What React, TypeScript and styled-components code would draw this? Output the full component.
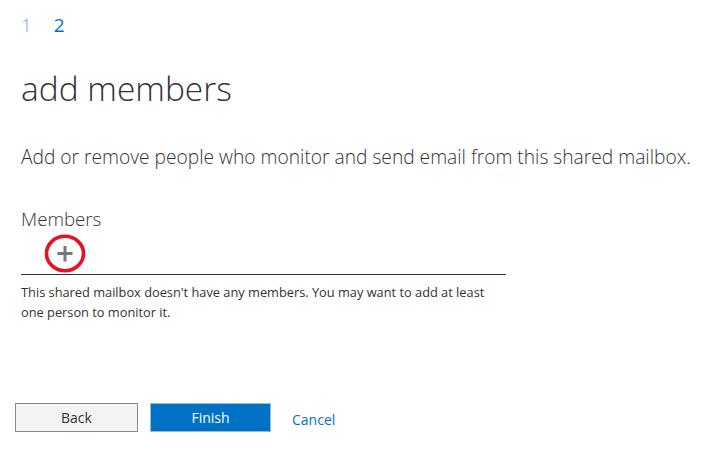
import React from 'react';
import styled, { createGlobalStyle } from 'styled-components';

const GlobalStyle = createGlobalStyle`
  html, body {
    margin: 0;
    padding: 0;
    background: #ffffff;
  }
  body {
    font-family: 'Open Sans', 'Noto Sans', sans-serif;
    color: #333333;
  }
`;

const Page = styled.div`
  width: 713px;
  height: 465px;
  display: flex;
  flex-direction: column;
  overflow: hidden;
`;

const Content = styled.div`
  display: flex;
  flex-direction: column;
  padding: 12px 0 0 21px;
`;

const Steps = styled.div`
  display: flex;
  gap: 22px;
  font-size: 19px;
  font-weight: 300;
  line-height: 26px;
`;

const Step = styled.span<{ $active?: boolean }>`
  color: ${(p) => (p.$active ? '#0072c6' : '#7ea6cf')};
  font-weight: ${(p) => (p.$active ? 400 : 300)};
`;

const Title = styled.h1`
  margin: 28px 0 0;
  font-size: 33.5px;
  font-weight: 300;
  line-height: 44px;
  color: #333333;
`;

const Description = styled.p`
  margin: 34px 0 0;
  font-size: 19.2px;
  font-weight: 300;
  line-height: 26px;
  color: #333333;
`;

const FieldLabel = styled.div`
  margin-top: 36px;
  font-size: 18.7px;
  font-weight: 300;
  line-height: 26px;
  color: #333333;
`;

const MemberBox = styled.div`
  width: 485px;
  height: 42px;
  display: flex;
  align-items: flex-end;
  border-bottom: 1px solid #333333;
`;

const AddButton = styled.button`
  margin: 0 0 1px 23px;
  padding: 0;
  border: none;
  background: transparent;
  display: flex;
  cursor: pointer;
`;

const Hint = styled.p`
  margin: 7px 0 0;
  width: 485px;
  font-size: 12.8px;
  line-height: 20px;
  color: #333333;
`;

const Footer = styled.div`
  margin-top: auto;
  margin-bottom: 33px;
  padding-left: 15px;
  display: flex;
  align-items: center;
`;

const Button = styled.button<{ $primary?: boolean }>`
  height: 29px;
  width: ${(p) => (p.$primary ? '121px' : '123px')};
  margin-right: ${(p) => (p.$primary ? '21px' : '12px')};
  padding: 0;
  font-family: 'Open Sans', 'Noto Sans', sans-serif;
  font-size: 14px;
  background: ${(p) => (p.$primary ? '#0072c6' : '#f3f3f3')};
  color: ${(p) => (p.$primary ? '#ffffff' : '#333333')};
  border: 1px solid ${(p) => (p.$primary ? '#9fb7cc' : '#8a8a8a')};
  cursor: pointer;
`;

const Link = styled.a`
  margin-top: 4px;
  font-size: 14px;
  color: #0072c6;
  text-decoration: none;
  cursor: pointer;
`;

const PlusIcon = () => (
  <svg width="42" height="39" viewBox="0 0 42 39">
    <ellipse cx="21" cy="19.5" rx="18.5" ry="17.2" fill="none" stroke="#e81123" strokeWidth="3.6" />
    <path d="M19.5 12h3v6h6v3h-6v6.5h-3v-6.5h-6v-3h6z" fill="#777777" />
  </svg>
);

const App = () => {
  return (
    <Page>
      <GlobalStyle />
      <Content>
        <Steps>
          <Step>1</Step>
          <Step $active>2</Step>
        </Steps>
        <Title>add members</Title>
        <Description>
          Add or remove people who monitor and send email from this shared mailbox.
        </Description>
        <FieldLabel>Members</FieldLabel>
        <MemberBox>
          <AddButton title="Add">
            <PlusIcon />
          </AddButton>
        </MemberBox>
        <Hint>
          This shared mailbox doesn't have any members. You may want to add at least one person to
          monitor it.
        </Hint>
      </Content>
      <Footer>
        <Button>Back</Button>
        <Button $primary>Finish</Button>
        <Link>Cancel</Link>
      </Footer>
    </Page>
  );
};

export default App;
